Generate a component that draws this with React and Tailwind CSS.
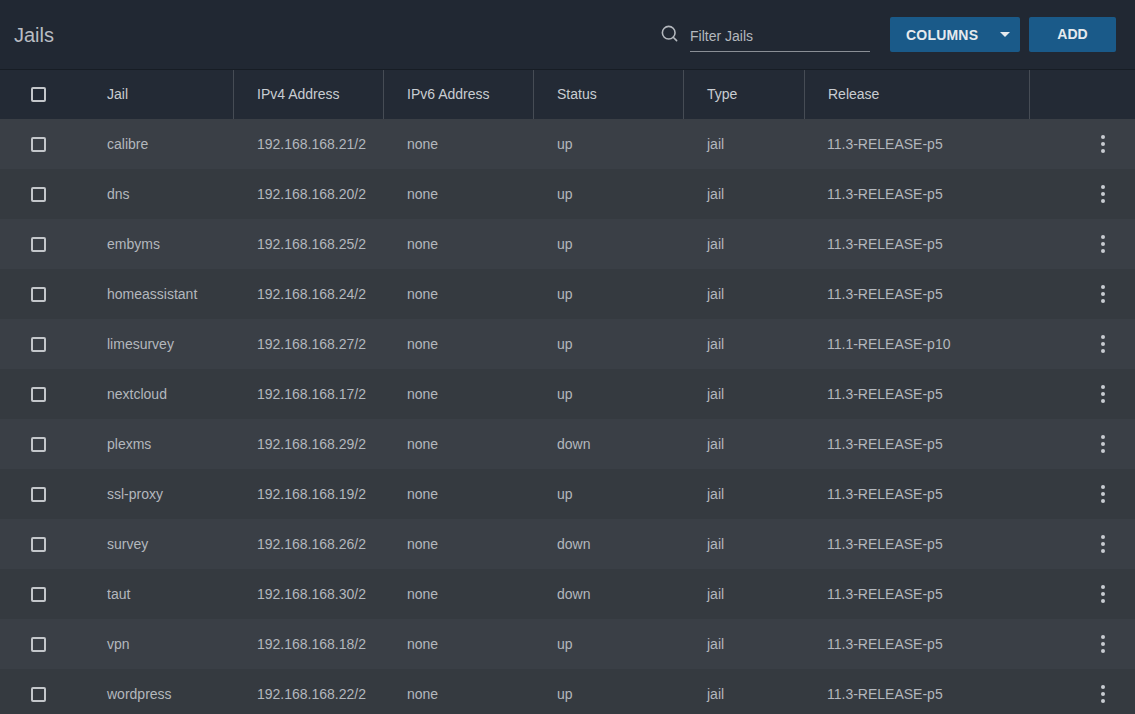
import React from 'react';
import { Search } from 'lucide-react';

const jails = [
  ['calibre', '192.168.168.21/2', 'up', '11.3-RELEASE-p5'],
  ['dns', '192.168.168.20/2', 'up', '11.3-RELEASE-p5'],
  ['embyms', '192.168.168.25/2', 'up', '11.3-RELEASE-p5'],
  ['homeassistant', '192.168.168.24/2', 'up', '11.3-RELEASE-p5'],
  ['limesurvey', '192.168.168.27/2', 'up', '11.1-RELEASE-p10'],
  ['nextcloud', '192.168.168.17/2', 'up', '11.3-RELEASE-p5'],
  ['plexms', '192.168.168.29/2', 'down', '11.3-RELEASE-p5'],
  ['ssl-proxy', '192.168.168.19/2', 'up', '11.3-RELEASE-p5'],
  ['survey', '192.168.168.26/2', 'down', '11.3-RELEASE-p5'],
  ['taut', '192.168.168.30/2', 'down', '11.3-RELEASE-p5'],
  ['vpn', '192.168.168.18/2', 'up', '11.3-RELEASE-p5'],
  ['wordpress', '192.168.168.22/2', 'up', '11.3-RELEASE-p5'],
];

const grid = 'grid grid-cols-[83px_150px_150px_150px_150px_121px_225px_1fr]';

const Checkbox = () => (
  <div className="w-[15px] h-[15px] border-2 border-[#c4c7cb] rounded-[2px] ml-[31px]" />
);

const Kebab = () => (
  <div className="flex flex-col items-center gap-[3px] ml-[72px]">
    <span className="w-[4px] h-[4px] rounded-full bg-[#c8ccd1]" />
    <span className="w-[4px] h-[4px] rounded-full bg-[#c8ccd1]" />
    <span className="w-[4px] h-[4px] rounded-full bg-[#c8ccd1]" />
  </div>
);

const App = () => {
  const headers = ['Jail', 'IPv4 Address', 'IPv6 Address', 'Status', 'Type', 'Release'];

  return (
    <div className="h-[714px] overflow-hidden bg-[#353a40] font-['Liberation_Sans',Arial,sans-serif] text-[14px]">
      {/* Toolbar */}
      <div className="h-[70px] bg-[#212833] border-b border-[#171d25] flex items-center pl-[14px] pr-[19px]">
        <h1 className="text-[20px] text-[#b9bdc3] mt-[1px]">Jails</h1>
        <div className="ml-auto flex items-center">
          <Search className="w-[19px] h-[19px] text-[#b4b8be] mr-[11px] mb-[2px]" strokeWidth={2} />
          <div className="w-[180px] border-b border-[#8a8f96] pb-[4px] pt-[8px] text-[14px] text-[#b4b8be]">
            Filter Jails
          </div>
          <button className="ml-[20px] w-[130px] h-[35px] bg-[#1a5a89] rounded-[2px] flex items-center pl-[16px] text-[14px] font-bold text-[#e6eaee] tracking-[0.2px]">
            <span className="mt-[2px]">COLUMNS</span>
            <svg className="ml-[22px]" width="10" height="5" viewBox="0 0 10 5">
              <path d="M0 0h10L5 5z" fill="#e6eaee" />
            </svg>
          </button>
          <button className="ml-[9px] w-[87px] h-[35px] bg-[#1a5a89] rounded-[2px] text-[14px] font-bold text-[#e6eaee] pb-[1px]">
            ADD
          </button>
        </div>
      </div>

      {/* Header */}
      <div className={`${grid} h-[49px] bg-[#232a35] text-[#c9cdd2]`}>
        <div className="flex items-center">
          <Checkbox />
        </div>
        {headers.map((h, i) => (
          <div
            key={h}
            className={`flex items-center ${i === 0 ? 'pl-[24px]' : 'pl-[23px] border-l border-[#464c55]'}`}
          >
            {h}
          </div>
        ))}
        <div className="border-l border-[#464c55]" />
      </div>

      {/* Rows */}
      {jails.map(([name, ip, status, release], i) => (
        <div
          key={name}
          className={`${grid} h-[50px] text-[#b3b7bd] ${i % 2 === 0 ? 'bg-[#3a3f46]' : 'bg-[#353a40]'}`}
        >
          <div className="flex items-center">
            <Checkbox />
          </div>
          <div className="flex items-center pl-[24px]">{name}</div>
          <div className="flex items-center pl-[24px]">{ip}</div>
          <div className="flex items-center pl-[24px]">none</div>
          <div className="flex items-center pl-[24px]">{status}</div>
          <div className="flex items-center pl-[24px]">jail</div>
          <div className="flex items-center pl-[23px]">{release}</div>
          <div className="flex items-center">
            <Kebab />
          </div>
        </div>
      ))}
    </div>
  );
};

export default App;
